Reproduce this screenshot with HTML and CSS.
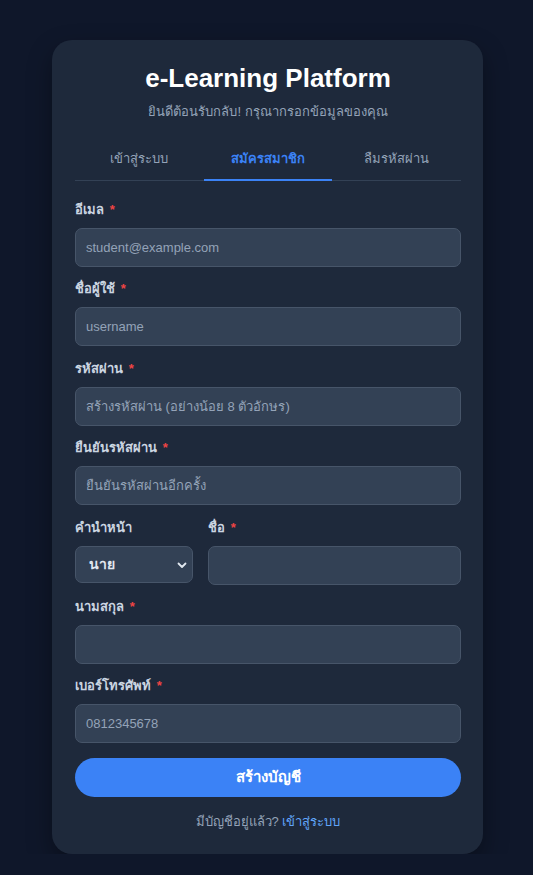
FILE: index.html
```html
<!DOCTYPE html>
<html lang="th">
<head>
<meta charset="utf-8">
<title>e-Learning Platform</title>
<link rel="stylesheet" href="styles.css">
</head>
<body>
<main class="card">
  <h1 class="title">e-Learning Platform</h1>
  <p class="subtitle">ยินดีต้อนรับกลับ! กรุณากรอกข้อมูลของคุณ</p>
  <nav class="tabs">
    <span class="tab">เข้าสู่ระบบ</span>
    <span class="tab active">สมัครสมาชิก</span>
    <span class="tab">ลืมรหัสผ่าน</span>
  </nav>
  <form class="form">
    <div class="field">
      <label class="label">อีเมล <span class="req">*</span></label>
      <input class="input" type="text" placeholder="student@example.com">
    </div>
    <div class="field">
      <label class="label">ชื่อผู้ใช้ <span class="req">*</span></label>
      <input class="input" type="text" placeholder="username">
    </div>
    <div class="field">
      <label class="label">รหัสผ่าน <span class="req">*</span></label>
      <input class="input" type="text" placeholder="สร้างรหัสผ่าน (อย่างน้อย 8 ตัวอักษร)">
    </div>
    <div class="field">
      <label class="label">ยืนยันรหัสผ่าน <span class="req">*</span></label>
      <input class="input" type="text" placeholder="ยืนยันรหัสผ่านอีกครั้ง">
    </div>
    <div class="row">
      <div class="field">
        <label class="label">คำนำหน้า</label>
        <div class="select-wrap">
          <div class="select">นาย</div>
          <svg class="chev" width="12" height="12" viewBox="0 0 12 12"><path d="M2.5 4.5 L6 8 L9.5 4.5" fill="none" stroke="#e2e8f0" stroke-width="1.8" stroke-linecap="round" stroke-linejoin="round"/></svg>
        </div>
      </div>
      <div class="field">
        <label class="label">ชื่อ <span class="req">*</span></label>
        <input class="input" type="text">
      </div>
    </div>
    <div class="field">
      <label class="label">นามสกุล <span class="req">*</span></label>
      <input class="input" type="text">
    </div>
    <div class="field last">
      <label class="label">เบอร์โทรศัพท์ <span class="req">*</span></label>
      <input class="input" type="text" placeholder="0812345678">
    </div>
    <button class="btn" type="button">สร้างบัญชี</button>
  </form>
  <p class="footer">มีบัญชีอยู่แล้ว? <a class="link" href="#">เข้าสู่ระบบ</a></p>
</main>
</body>
</html>
```

FILE: styles.css
```css
* { box-sizing: border-box; }
html, body { margin: 0; padding: 0; }
body {
  background: #0f172a;
  font-family: "Liberation Sans", Arial, sans-serif;
  color: #e2e8f0;
  padding-top: 40px;
}
.card {
  width: 431px;
  margin: 0 auto 0 52px;
  background: #1e293b;
  border-radius: 20px;
  padding: 22px 22px 22px 23px;
  box-shadow: 0 10px 25px rgba(0,0,0,0.35);
}
.title {
  margin: 0;
  text-align: center;
  font-size: 26px;
  line-height: 32px;
  font-weight: 700;
  color: #ffffff;
}
.subtitle {
  margin: 8px 0 0;
  text-align: center;
  font-size: 13px;
  line-height: 20px;
  color: #94a3b8;
}
.tabs {
  margin-top: 15px;
  display: grid;
  grid-template-columns: 1fr 1fr 1fr;
  border-bottom: 1px solid #334155;
}
.tab {
  text-align: center;
  font-size: 13px;
  line-height: 20px;
  padding: 12px 0 10px;
  color: #94a3b8;
  border-bottom: 2px solid transparent;
  margin-bottom: -1px;
}
.tab.active {
  color: #3b82f6;
  font-weight: 700;
  border-bottom-color: #3b82f6;
}
.form {
  margin-top: 20px;
  display: flex;
  flex-direction: column;
}
.field {
  display: flex;
  flex-direction: column;
  margin-bottom: 13.4px;
}
.field.last { margin-bottom: 15px; }
.label {
  font-size: 13px;
  line-height: 18px;
  font-weight: 700;
  color: #cbd5e1;
  margin-bottom: 9px;
}
.req { color: #ef4444; margin-left: 2px; }
.input {
  height: 39px;
  width: 100%;
  background: #334155;
  border: 1px solid #475569;
  border-radius: 7px;
  padding: 0 10px;
  font-family: "Liberation Sans", Arial, sans-serif;
  font-size: 13px;
  color: #e2e8f0;
  outline: none;
}
.input::placeholder { color: #94a3b8; }
.row {
  display: grid;
  grid-template-columns: 118px 1fr;
  column-gap: 15px;
}
.row .field { margin-bottom: 13px; }
.select-wrap { position: relative; }
.select {
  height: 37px;
  background: #334155;
  border: 1px solid #475569;
  border-radius: 7px;
  padding: 0 13px;
  display: flex;
  align-items: center;
  font-size: 14px;
  font-weight: 700;
  color: #e2e8f0;
}
.chev { position: absolute; right: 5px; top: 13px; }
.btn {
  height: 39px;
  border: none;
  border-radius: 999px;
  background: #3b82f6;
  color: #ffffff;
  font-family: "Liberation Sans", Arial, sans-serif;
  font-size: 15px;
  font-weight: 700;
}
.footer {
  margin: 15px 0 0;
  text-align: center;
  font-size: 13px;
  line-height: 20px;
  color: #94a3b8;
}
.link { color: #60a5fa; text-decoration: none; }
```
